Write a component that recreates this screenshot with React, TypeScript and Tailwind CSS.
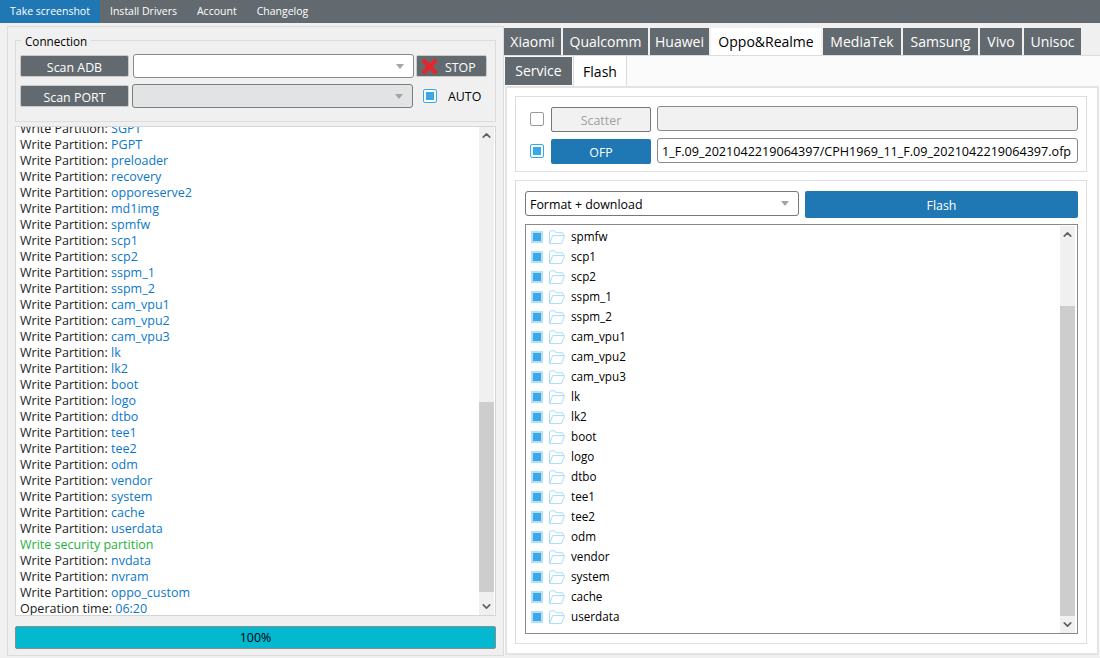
import { ChevronDown, ChevronUp } from "lucide-react";

const topMenu = ["Install Drivers", "Account", "Changelog"];

const brandTabs = [
  { name: "Xiaomi", width: "w-[57px]" },
  { name: "Qualcomm", width: "w-[85px]" },
  { name: "Huawei", width: "w-[59px]" },
  { name: "Oppo&Realme", width: "w-[110px]", active: true },
  { name: "MediaTek", width: "w-[78px]" },
  { name: "Samsung", width: "w-[75px]" },
  { name: "Vivo", width: "w-[42px]" },
  { name: "Unisoc", width: "w-[57px]" },
];

const logNames = [
  "SGPT", "PGPT", "preloader", "recovery", "opporeserve2", "md1img", "spmfw", "scp1", "scp2",
  "sspm_1", "sspm_2", "cam_vpu1", "cam_vpu2", "cam_vpu3", "lk", "lk2", "boot", "logo", "dtbo",
  "tee1", "tee2", "odm", "vendor", "system", "cache", "userdata",
];

const partitions = [
  "spmfw", "scp1", "scp2", "sspm_1", "sspm_2", "cam_vpu1", "cam_vpu2", "cam_vpu3", "lk", "lk2",
  "boot", "logo", "dtbo", "tee1", "tee2", "odm", "vendor", "system", "cache", "userdata",
];

function Check({ checked = true, className = "" }: { checked?: boolean; className?: string }) {
  return (
    <span
      className={`flex h-[14px] w-[14px] shrink-0 items-center justify-center rounded-[2px] border ${
        checked ? "border-[#36a9e8] bg-white" : "border-[#9a9a9a] bg-white"
      } ${className}`}
    >
      {checked && <span className="h-[8px] w-[8px] bg-[#3aa9ea]" />}
    </span>
  );
}

function TreeCheck() {
  return (
    <span className="flex h-[12px] w-[12px] shrink-0 items-center justify-center border-2 border-[#b5e0f7] bg-white">
      <span className="h-[8px] w-[8px] bg-[#3aa9ea]" />
    </span>
  );
}

function Arrow() {
  return (
    <span className="h-0 w-0 border-x-[4px] border-t-[5px] border-x-transparent border-t-[#a5a5a5]" />
  );
}

function FolderIcon() {
  return (
    <svg width="16" height="15" viewBox="0 0 16 15" fill="none" className="shrink-0">
      <path
        d="M.5 13.5V2C.5 1.2 1 .8 1.6.8h4l1.5 2h6c.6 0 1 .4 1 1v1.7M.6 13.6h12l2.9-8H3.6L.7 13.3"
        stroke="#a9dcf6"
        strokeWidth="1"
        fill="#fff"
      />
    </svg>
  );
}

function Scrollbar({ thumbTop, thumbHeight }: { thumbTop: string; thumbHeight: string }) {
  return (
    <div className="flex h-full w-[15px] shrink-0 flex-col bg-[#f0f0f0]">
      <div className="flex h-[16px] shrink-0 items-center justify-center">
        <ChevronUp size={13} strokeWidth={3} className="text-[#606060]" />
      </div>
      <div className="flex flex-1 flex-col">
        <div className={thumbTop} />
        <div className={`${thumbHeight} bg-[#cdcdcd]`} />
      </div>
      <div className="flex h-[17px] shrink-0 items-center justify-center">
        <ChevronDown size={13} strokeWidth={3} className="text-[#606060]" />
      </div>
    </div>
  );
}

export default function App() {
  return (
    <div className="flex h-[658px] w-[1100px] flex-col overflow-hidden bg-[#f0f0f0] font-['Open_Sans',sans-serif] text-[12.4px] text-[#222]">
      <div className="flex h-[23px] shrink-0 items-center bg-[#636a6f] text-[10.5px] text-white">
        <div className="flex h-full w-[100px] items-center justify-center bg-[#1f77b4]">Take screenshot</div>
        <div className="ml-[10px] flex gap-[20px]">
          {topMenu.map((item) => (
            <span key={item}>{item}</span>
          ))}
        </div>
      </div>

      <div className="flex min-h-0 flex-1">
        <div className="mt-[3px] mb-[2px] ml-[7px] flex w-[497px] shrink-0 flex-col border border-[#dcdcdc] px-[7px] pt-[5px] pb-[7px]">
          <fieldset className="h-[90px] shrink-0 border border-[#dcdcdc] px-[4px]">
            <legend className="ml-[1px] px-[4px] pt-[2px] text-[11.7px] leading-[14px] text-black">Connection</legend>
            <div className="mt-[6px] flex items-center">
              <button className="h-[22px] w-[109px] rounded-[2px] border border-[#c9c9c9] bg-[#636a6f] pt-[4px] leading-[14px] text-white">
                Scan ADB
              </button>
              <div className="ml-[4px] flex h-[24px] w-[281px] items-center justify-end rounded-[3px] border border-[#8a8a8a] bg-white pr-[9px]">
                <Arrow />
              </div>
              <button className="ml-[2px] flex h-[22px] w-[71px] items-center rounded-[2px] border border-[#c9c9c9] bg-[#636a6f] pl-[5px] text-white">
                <svg width="15" height="15" viewBox="0 0 15 15">
                  <path d="M2.2 2.2l10.6 10.6M12.8 2.2L2.2 12.8" stroke="#e8252b" strokeWidth="4.4" strokeLinecap="square" />
                </svg>
                <span className="mt-[4px] ml-[8px] leading-[14px]">STOP</span>
              </button>
            </div>
            <div className="mt-[6px] flex items-center">
              <button className="h-[22px] w-[109px] rounded-[2px] border border-[#c9c9c9] bg-[#636a6f] pt-[4px] leading-[14px] text-white">
                Scan PORT
              </button>
              <div className="ml-[3px] flex h-[24px] w-[281px] items-center justify-end rounded-[3px] border border-[#7b7b7b] bg-[#e1e3e5] pr-[9px]">
                <Arrow />
              </div>
              <Check className="ml-[10px]" />
              <span className="mt-[2px] ml-[11px] text-black">AUTO</span>
            </div>
          </fieldset>

          <div className="mt-[4px] flex h-[490px] shrink-0 border border-[#d5d5d5] bg-white pr-[1px]">
            <div className="min-w-0 flex-1 overflow-hidden pl-[4px] text-[12.5px]">
              <div className="mt-[-6px] leading-[16px]">
                {logNames.map((name) => (
                  <div key={name} className="h-[16px]">
                    Write Partition: <span className="text-[#0b78c9]">{name}</span>
                  </div>
                ))}
                <div className="h-[16px] text-[#1fb13c]">Write security partition</div>
                {["nvdata", "nvram", "oppo_custom"].map((name) => (
                  <div key={name} className="h-[16px]">
                    Write Partition: <span className="text-[#0b78c9]">{name}</span>
                  </div>
                ))}
                <div className="h-[16px]">
                  Operation time: <span className="text-[#0b78c9]">06:20</span>
                </div>
              </div>
            </div>
            <Scrollbar thumbTop="h-[259px]" thumbHeight="h-[190px]" />
          </div>

          <div className="mt-[10px] flex h-[23px] shrink-0 items-center justify-center rounded-[2px] border border-[#8b8b8b] bg-[#04b8d0] pt-[2px] text-black">
            100%
          </div>
        </div>

        <div className="flex min-w-0 flex-1 flex-col">
          <div className="mt-[5px] flex h-[27px] shrink-0 gap-[2px]">
            {brandTabs.map((tab) => (
              <div
                key={tab.name}
                className={`flex items-center justify-center text-[14px] ${tab.width} ${
                  tab.active ? "bg-white text-black" : "bg-[#636a6f] text-white"
                }`}
              >
                {tab.name}
              </div>
            ))}
          </div>

          <div className="mb-[3px] flex min-h-0 flex-1 flex-col border-t border-[#dcdcdc] bg-[#fbfbfb]">
            <div className="flex h-[30px] shrink-0 pl-[1px]">
              <div className="mt-[1px] flex h-[28px] w-[67px] items-center justify-center bg-[#636a6f] pb-[2px] text-[14px] text-white">
                Service
              </div>
              <div className="ml-[1px] flex w-[54px] items-center justify-center border-x border-[#dcdcdc] bg-white text-[14px] text-black">
                Flash
              </div>
            </div>

            <div className="mx-[1px] flex min-h-0 flex-1 flex-col border-2 border-[#e3e3e3] bg-white pt-[8px] pr-[10px] pb-[9px] pl-[8px]">
              <div className="h-[76px] shrink-0 border border-[#dedede] pt-[9px] pl-[14px]">
                <div className="flex items-start">
                  <Check checked={false} className="mt-[6px]" />
                  <button className="mt-[1px] ml-[7px] h-[25px] w-[100px] shrink-0 rounded-[2px] border border-[#777] bg-[#f1f1f1] pt-[2px] leading-[14px] text-[#a0a0a0]">
                    Scatter
                  </button>
                  <div className="ml-[6px] h-[25px] w-[421px] shrink-0 rounded-[3px] border border-[#8a8a8a] bg-[#f1f1f1]" />
                </div>
                <div className="mt-[6px] flex items-start">
                  <Check className="mt-[6px]" />
                  <button className="mt-[1px] ml-[7px] h-[25px] w-[100px] shrink-0 rounded-[2px] bg-[#1f77b4] pt-[2px] leading-[14px] text-white">
                    OFP
                  </button>
                  <div className="ml-[6px] flex h-[25px] w-[421px] shrink-0 items-center overflow-hidden whitespace-nowrap rounded-[3px] border border-[#8a8a8a] bg-white pt-[3px] pl-[4px] text-[12.6px] leading-[14px] text-black">
                    1_F.09_2021042219064397/CPH1969_11_F.09_2021042219064397.ofp
                  </div>
                </div>
              </div>

              <div className="mt-[8px] flex min-h-0 flex-1 flex-col border border-[#dedede] pt-[10px] pr-[8px] pb-[9px] pl-[9px]">
                <div className="flex h-[25px] shrink-0 items-start">
                  <div className="flex h-[25px] w-[274px] shrink-0 items-center justify-between rounded-[3px] border border-[#777] bg-white pr-[9px] pl-[4px] text-black">
                    <span className="mt-[2px] leading-[14px]">Format + download</span>
                    <Arrow />
                  </div>
                  <button className="ml-[6px] h-[27px] w-[273px] shrink-0 rounded-[2px] bg-[#1f77b4] pt-[2px] leading-[14px] text-white">
                    Flash
                  </button>
                </div>
                <div className="mt-[8px] flex min-h-0 w-[553px] flex-1 border border-[#868a8e] bg-white pt-[1px] pr-[2px]">
                  <div className="min-w-0 flex-1 pt-[1px] pl-[5px] text-[11.7px]">
                    {partitions.map((name) => (
                      <div key={name} className="flex h-[20px] items-center text-black">
                        <TreeCheck />
                        <span className="ml-[6px]">
                          <FolderIcon />
                        </span>
                        <span className="ml-[6px]">{name}</span>
                      </div>
                    ))}
                  </div>
                  <Scrollbar thumbTop="h-[64px]" thumbHeight="h-[310px]" />
                </div>
              </div>
            </div>
          </div>
        </div>
      </div>
    </div>
  );
}
